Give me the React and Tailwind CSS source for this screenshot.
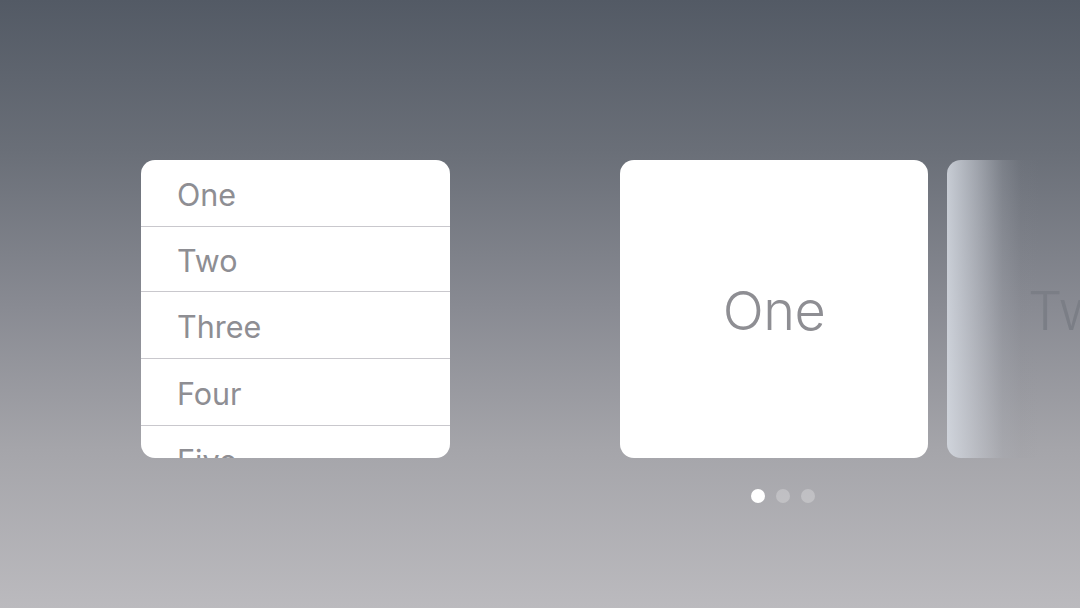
import React from "react";

const rows = [
  { label: "One", h: "h-[67px]" },
  { label: "Two", h: "h-[65px]" },
  { label: "Three", h: "h-[67px]" },
  { label: "Four", h: "h-[67px]" },
  { label: "Five", h: "h-[67px]" },
];

export default function App() {
  return (
    <div
      className="w-[1080px] h-[608px] overflow-hidden bg-[linear-gradient(180deg,#535a65_0%,#6a6f78_25%,#888a92_50%,#a5a5aa_74%,#bbbabe_100%)]"
      style={{ fontFamily: "Inter, 'Open Sans', 'Liberation Sans', sans-serif" }}
    >
      <div className="flex items-start pt-[160px] pl-[141px]">
        <div className="w-[309px] h-[298px] shrink-0 overflow-hidden rounded-[14px] bg-white">
          {rows.map((r, i) => (
            <div
              key={r.label}
              className={`${r.h} flex items-center pl-[36px] pt-[3px] text-[30.5px] text-[#8e8e93] ${i < rows.length - 1 ? "border-b border-[#c9c8cd]" : ""}`}
            >
              {r.label}
            </div>
          ))}
        </div>

        <div className="ml-[170px] flex flex-col items-center shrink-0">
          <div className="w-[308px] h-[298px] rounded-[14px] bg-white flex items-center justify-center pt-[3px]">
            <span className="text-[54px] font-light text-[#8e8e93] tracking-[-0.5px]">One</span>
          </div>
          <div className="mt-[31px] pl-[18px] flex gap-[11px]">
            <span className="w-[14px] h-[14px] rounded-full bg-white" />
            <span className="w-[14px] h-[14px] rounded-full bg-white/25" />
            <span className="w-[14px] h-[14px] rounded-full bg-white/25" />
          </div>
        </div>

        <div className="ml-[19px] w-[308px] h-[298px] shrink-0 rounded-[14px] bg-[linear-gradient(90deg,rgba(215,220,228,0.85)_0%,rgba(200,204,212,0.55)_10%,rgba(170,174,182,0.25)_18%,rgba(140,144,152,0.05)_24%,rgba(140,144,152,0)_30%)] flex items-center pl-[81px] pt-[3px]">
          <span className="text-[54px] font-light text-[#7b7e86] tracking-[-0.5px]">Two</span>
        </div>
      </div>
    </div>
  );
}
